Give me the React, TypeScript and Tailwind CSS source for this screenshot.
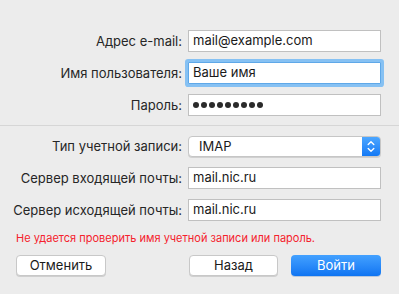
import React from 'react';

const font = "[font-family:'Inter','Liberation_Sans',sans-serif]";

const Row = ({ label, children, className = '' }: { label: string; children: React.ReactNode; className?: string }) => (
    <div className={`flex items-center ${className}`}>
        <div className="w-[183px] text-right text-[13px] text-[#262626] pr-[1px] leading-none whitespace-nowrap">{label}</div>
        <div className="ml-[5px] w-[193px]">{children}</div>
    </div>
);

const Field = ({ value, focused = false }: { value: string; focused?: boolean }) => (
    <div
        className={`h-[22px] flex items-center bg-white border text-[13px] text-[#1a1a1a] pl-[4px] ${focused ? 'border-[#5fa8e8] shadow-[0_0_0_3px_#86c1f3] rounded-[1px]' : 'border-[#c0c0c0]'}`}
    >
        {value}
    </div>
);

export default function App() {
    return (
        <div className={`w-[399px] h-[294px] bg-[#ececec] flex flex-col pt-[30px] ${font}`}>
            {/* Учетные данные */}
            <div className="flex flex-col gap-[10px]">
                <Row label="Адрес e-mail:"><Field value="mail@example.com" /></Row>
                <Row label="Имя пользователя:"><Field value="Ваше имя" focused /></Row>
                <Row label="Пароль:">
                    <div className="h-[22px] flex items-center bg-white border border-[#c0c0c0] pl-[4px] gap-[2px]">
                        {Array.from({ length: 9 }).map((_, i) => (
                            <span key={i} className="w-[6px] h-[6px] rounded-full bg-[#2a2a2a]" />
                        ))}
                    </div>
                </Row>
            </div>

            <div className="mt-[9px] h-px bg-[#d6d6d6]" />

            {/* Сервер */}
            <div className="flex flex-col gap-[10px] mt-[10px]">
                <Row label="Тип учетной записи:">
                    <div className="h-[21px] flex items-stretch bg-white border border-[#c6c6c6] rounded-[4px] shadow-[0_1px_0_#d0d0d0] overflow-hidden">
                        <div className="flex-1 flex items-center pl-[10px] text-[13px] text-[#1a1a1a]">IMAP</div>
                        <div className="w-[18px] flex items-center justify-center bg-gradient-to-b from-[#4ba6ff] to-[#1279f5]">
                            <svg width="8" height="13" viewBox="0 0 8 13" fill="none" stroke="white" strokeWidth="1.4" strokeLinecap="round" strokeLinejoin="round">
                                <path d="M1.2 4.5 L4 1.8 L6.8 4.5" />
                                <path d="M1.2 8.5 L4 11.2 L6.8 8.5" />
                            </svg>
                        </div>
                    </div>
                </Row>
                <Row label="Сервер входящей почты:"><Field value="mail.nic.ru" /></Row>
                <Row label="Сервер исходящей почты:"><Field value="mail.nic.ru" /></Row>
            </div>

            <div className="mt-[11px] pl-[16px] text-[11px] leading-[13px] text-[#f5222d] whitespace-nowrap">
                Не удается проверить имя учетной записи или пароль.
            </div>

            {/* Кнопки */}
            <div className="mt-[10px] flex items-center pl-[16px] text-[13px]">
                <button className="w-[90px] h-[21px] bg-white border border-[#c8c8c8] rounded-[4px] shadow-[0_1px_0_#cfcfcf] text-[#1a1a1a] leading-none">
                    Отменить
                </button>
                <button className="ml-[83px] w-[89px] h-[21px] bg-white border border-[#c8c8c8] rounded-[4px] shadow-[0_1px_0_#cfcfcf] text-[#1a1a1a] leading-none">
                    Назад
                </button>
                <button className="ml-[13px] w-[90px] h-[21px] rounded-[4px] bg-gradient-to-b from-[#43a1ff] to-[#0d74f2] text-white leading-none shadow-[0_1px_0_#b8c8dc]">
                    Войти
                </button>
            </div>
        </div>
    );
}
